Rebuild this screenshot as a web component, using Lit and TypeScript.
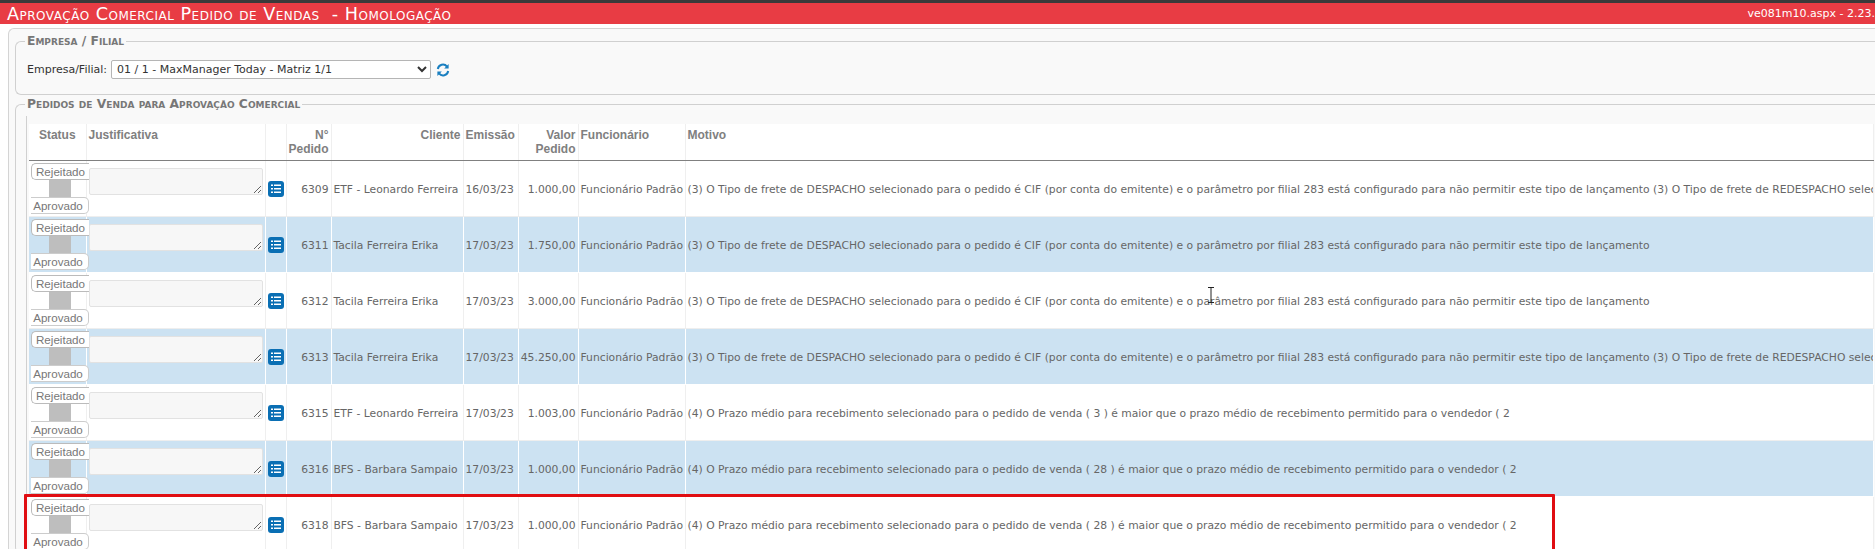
import { LitElement, html, css } from "lit";
import { customElement } from "lit/decorators.js";

const D = "(3) O Tipo de frete de DESPACHO selecionado para o pedido é CIF (por conta do emitente) e o parâmetro por filial 283 está configurado para não permitir este tipo de lançamento";
const R = " (3) O Tipo de frete de REDESPACHO selecionado para o pedido é CIF (por conta do emitente) e o parâmetro por filial 283 está configurado";
const P = (n: string) => `(4) O Prazo médio para recebimento selecionado para o pedido de venda ( ${n} ) é maior que o prazo médio de recebimento permitido para o vendedor ( 2`;

const rows = [
  ["6309", "ETF - Leonardo Ferreira", "16/03/23", "1.000,00", D + R],
  ["6311", "Tacila Ferreira Erika", "17/03/23", "1.750,00", D],
  ["6312", "Tacila Ferreira Erika", "17/03/23", "3.000,00", D],
  ["6313", "Tacila Ferreira Erika", "17/03/23", "45.250,00", D + R],
  ["6315", "ETF - Leonardo Ferreira", "17/03/23", "1.003,00", P("3")],
  ["6316", "BFS - Barbara Sampaio", "17/03/23", "1.000,00", P("28")],
  ["6318", "BFS - Barbara Sampaio", "17/03/23", "1.000,00", P("28")],
];

@customElement("app-root")
export class AppRoot extends LitElement {
  static styles = css`
    :host { display: block; height: 549px; overflow: hidden; position: relative; background: #fff;
      font-family: "DejaVu Sans", sans-serif; font-size: 10.75px; color: #666; }
    .topbar { height: 3px; background: #3a3a3a; }
    .title { height: 21px; background: #e83c44; color: #fff; display: flex; justify-content: space-between; align-items: center; padding: 0 0 0 7px; overflow: hidden; white-space: pre; }
    .title h1 { margin: 0; font-size: 17.6px; letter-spacing: 0.5px; font-weight: normal; font-variant: small-caps; font-family: "DejaVu Sans", sans-serif; }
    .title span { font-size: 11px; }
    .panel { margin: 4px 0 0 8px; border: 1px solid #d4d4d4; border-right: 0; border-bottom: 0; border-radius: 6px 0 0 0; background: #f9f9f9; padding: 5px 0 0 6px; height: 600px; }
    fieldset { margin: 0; border: 1px solid #d0d0d0; border-right: 0; border-radius: 6px 0 0 6px; padding: 0; min-width: 0; }
    fieldset.list { margin-top: 2px; border-bottom: 0; }
    legend { margin-left: 9px; padding: 0 2px; font-size: 12.3px; font-weight: bold; font-variant: small-caps; color: #777; line-height: 14px; }
    .filter { display: flex; align-items: center; height: 19px; padding: 12px 0 15px 11px; color: #333; font-size: 11px; }
    .filter select { margin-left: 4px; width: 320px; height: 19px; font: 11px "DejaVu Sans", sans-serif; color: #333; background: #fff; border: 1px solid #b5b5b5; border-radius: 2px; padding: 0 1px; }
    .filter svg { margin-left: 5px; }
    .wrap { margin: 5px 0 0 10px; border-left: 1px solid #d0d0d0; padding: 8px 0 0 2px; }
    table { border-collapse: collapse; table-layout: fixed; width: 1845px; background: #fff; }
    th { font: bold 12px/14px "Liberation Sans", sans-serif; color: #808080; vertical-align: top; padding: 4px 2px 0; height: 32px; text-align: left; border-right: 1px solid #efefef; border-bottom: 1px solid #808080; }
    th.c { text-align: center; }
    th.r, td.r { text-align: right; }
    td { height: 56px; padding: 1px 2px 0; white-space: nowrap; overflow: hidden; border-right: 1px solid #efefef; border-bottom: 1px solid #eee; box-sizing: border-box; }
    tr.alt td { background: #cce2f2; border-color: #fff; }
    td.status { padding: 0; overflow: visible; position: relative; }
    .sw { display: flex; flex-direction: column; align-items: flex-start; margin-left: 2px; width: 58px; }
    .sw b { font: 11.6px/15px "Liberation Sans", sans-serif; color: #777; background: #fff; box-sizing: border-box; text-align: center; }
    .sw .rej { width: 58px; border: 1px solid #bbb; border-right: 0; border-radius: 5px 0 0 5px; height: 17px; position: relative; z-index: 1; }
    .sw .apr { width: 58px; border: 1px solid #ccc; border-left: 0; border-radius: 0 5px 5px 0; height: 17px; padding-right: 3px; }
    .sw i { display: block; width: 22px; height: 17px; margin-left: 18px; background: #bebebe; }
    textarea { display: block; box-sizing: border-box; width: 174px; height: 27px; margin: 0 0 14px; resize: both; background: #f7f7f7; border: 1px solid #e2e2e2; border-radius: 2px; }
    td.ta { padding: 0 0 0 2px; }
    td.ic { padding: 0 0 0 2px; }
    td.ic svg { display: block; }
    .mark { position: absolute; left: 24px; top: 494px; width: 1531px; height: 80px; border: 3px solid #e00d12; box-sizing: border-box; border-radius: 1px; }
    .cursor { position: absolute; left: 1207px; top: 287px; }
  `;

  render() {
    return html`
      <div class="topbar"></div>
      <div class="title"><h1>Aprovação Comercial Pedido de Vendas  - Homologação</h1><span>ve081m10.aspx - 2.23.</span></div>
      <div class="panel">
        <fieldset>
          <legend>Empresa / Filial</legend>
          <div class="filter">
            <label>Empresa/Filial:</label>
            <select><option>01 / 1 - MaxManager Today - Matriz 1/1</option></select>
            <svg width="14" height="14" viewBox="0 0 14 14" fill="none" stroke="#1a7fc0" stroke-width="2">
              <path d="M1.8 6A5.2 5.2 0 0 1 11 3.6"/><path d="M12.6 1v4.4H8.2" fill="#1a7fc0" stroke="none"/>
              <path d="M12.2 8A5.2 5.2 0 0 1 3 10.4"/><path d="M1.4 13V8.6h4.4" fill="#1a7fc0" stroke="none"/>
            </svg>
          </div>
        </fieldset>
        <fieldset class="list">
          <legend>Pedidos de Venda para Aprovação Comercial</legend>
          <div class="wrap">
            <table>
              <colgroup><col style="width:57px"/><col style="width:179px"/><col style="width:21px"/><col style="width:45px"/><col style="width:132px"/><col style="width:55px"/><col style="width:60px"/><col style="width:107px"/><col/></colgroup>
              <thead><tr>
                <th class="c">Status</th><th>Justificativa</th><th></th><th class="r">N°<br/>Pedido</th><th class="r">Cliente</th><th>Emissão</th><th class="r">Valor<br/>Pedido</th><th>Funcionário</th><th>Motivo</th>
              </tr></thead>
              <tbody>
                ${rows.map((r, i) => html`<tr class=${i % 2 ? "alt" : ""}>
                  <td class="status"><div class="sw"><b class="rej">Rejeitado</b><i></i><b class="apr">Aprovado</b></div></td>
                  <td class="ta"><textarea></textarea></td>
                  <td class="ic"><svg width="16" height="16" viewBox="0 0 16 16"><rect width="16" height="16" rx="3" fill="#0a6fb4"/><g fill="#fff"><rect x="3" y="3.5" width="2" height="1.5"/><rect x="6" y="3.5" width="7" height="1.5"/><rect x="3" y="7" width="2" height="1.5"/><rect x="6" y="7" width="7" height="1.5"/><rect x="3" y="10.5" width="2" height="1.5"/><rect x="6" y="10.5" width="7" height="1.5"/></g></svg></td>
                  <td class="r">${r[0]}</td><td>${r[1]}</td><td>${r[2]}</td><td class="r">${r[3]}</td><td>Funcionário Padrão</td><td>${r[4]}</td>
                </tr>`)}
              </tbody>
            </table>
          </div>
        </fieldset>
      </div>
      <div class="mark"></div>
      <svg class="cursor" width="8" height="16" viewBox="0 0 8 16" fill="none" stroke="#222"><path d="M1 .5h6M4 .5v15M1 15.5h6"/></svg>
    `;
  }
}
